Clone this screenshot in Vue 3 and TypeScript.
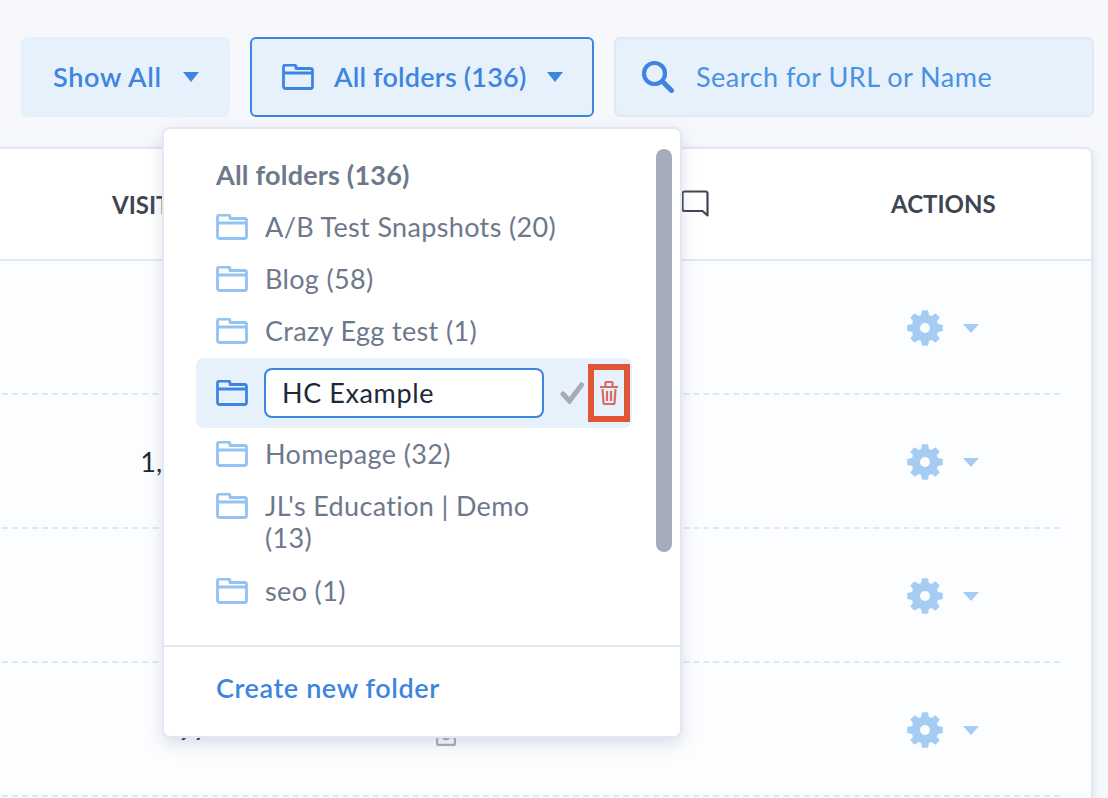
<script setup lang="ts">
interface Folder { name: string }
const folders: Folder[] = [
  { name: 'A/B Test Snapshots (20)' },
  { name: 'Blog (58)' },
  { name: 'Crazy Egg test (1)' },
]
const after: Folder[] = [
  { name: 'Homepage (32)' },
  { name: "JL's Education | Demo (13)" },
  { name: 'seo (1)' },
]
const rows = [
  { visits: '541', mark: false },
  { visits: '1,412', mark: false },
  { visits: '284', mark: false },
  { visits: '97', mark: true },
]
const folderPath = 'M1.500 9V3a2 2 0 0 1 2-2H12a2 2 0 0 1 2 2v1.500h14.500a2 2 0 0 1 2 2V22.500a2 2 0 0 1-2 2h-25a2 2 0 0 1-2-2V9h29'

function buildGear(): string {
  const pts: string[] = []
  const R = 18
  const r = 13.6
  for (let i = 0; i < 8; i++) {
    const a = (i * Math.PI) / 4 - Math.PI / 2
    const steps: [number, number][] = [
      [r, a - 0.29],
      [R, a - 0.17],
      [R, a + 0.17],
      [r, a + 0.29],
    ]
    for (const [rad, ang] of steps) {
      pts.push(`${(18 + rad * Math.cos(ang)).toFixed(2)} ${(18 + rad * Math.sin(ang)).toFixed(2)}`)
    }
  }
  return `M${pts.join('L')}ZM18 13a5 5 0 1 0 0 10 5 5 0 0 0 0-10z`
}
const gearPath = buildGear()
</script>

<template>
  <div class="page">
    <div class="toolbar">
      <button class="btn show"><span>Show All</span><i class="caret"></i></button>
      <button class="btn folders">
        <svg class="ficon" viewBox="0 0 32 26" width="32" height="26"><path :d="folderPath" fill="none" stroke="#3d85e0" stroke-width="2.800" stroke-linejoin="round" /></svg>
        <span>All folders (136)</span><i class="caret"></i>
      </button>
      <div class="search">
        <svg viewBox="0 0 32 32" width="32" height="32"><circle cx="12.500" cy="12.500" r="10.500" fill="none" stroke="#3d85e0" stroke-width="4.200" /><path d="M21 21l8.500 8.500" stroke="#3d85e0" stroke-width="5" stroke-linecap="round" /></svg>
        <span>Search for URL or Name</span>
      </div>
    </div>

    <div class="table">
      <div class="thead">
        <div class="th-visits">VISITS</div>
        <svg class="comment" viewBox="0 0 28 28" width="28" height="28"><path d="M3.500 1.500h21a2 2 0 0 1 2 2v22l-5-4.500H3.500a2 2 0 0 1-2-2v-15.500a2 2 0 0 1 2-2z" fill="none" stroke="#3f4653" stroke-width="2.200" stroke-linejoin="round" /></svg>
        <div class="th-actions">ACTIONS</div>
      </div>
      <div v-for="(r, i) in rows" :key="i" class="row">
        <div class="visits">{{ r.visits }}</div>
        <div v-if="r.mark" class="mid"><svg viewBox="0 0 20 20" width="20" height="20"><path d="M3 1h14a2 2 0 0 1 2 2v14a2 2 0 0 1-2 2H3a2 2 0 0 1-2-2V3a2 2 0 0 1 2-2zM1 11h6l1.500 2h3l1.500-2h6" fill="none" stroke="#a5abb9" stroke-width="2.400" /></svg></div>
        <div class="act">
          <svg viewBox="0 0 36 36" width="36" height="36"><path :d="gearPath" fill="#a5cdf4" fill-rule="evenodd" /></svg>
          <i class="caret light"></i>
        </div>
      </div>
    </div>

    <div class="menu">
      <div class="list">
        <div class="title">All folders (136)</div>
        <div v-for="f in folders" :key="f.name" class="item">
          <svg class="ficon" viewBox="0 0 32 26" width="32" height="26"><path :d="folderPath" fill="none" stroke="#92c3f2" stroke-width="2.800" stroke-linejoin="round" /></svg>
          <span>{{ f.name }}</span>
        </div>
        <div class="item editing">
          <svg class="ficon" viewBox="0 0 32 26" width="32" height="26"><path :d="folderPath" fill="none" stroke="#3d85e0" stroke-width="2.800" stroke-linejoin="round" /></svg>
          <div class="input">HC Example</div>
          <svg class="check" viewBox="0 0 24 22" width="24" height="22"><path d="M3 12l6.500 7L21.500 3" fill="none" stroke="#a5abb9" stroke-width="5" stroke-linecap="round" /></svg>
          <div class="trash">
            <svg viewBox="0 0 18 24" width="18" height="24"><path d="M0 6h18M5.500 5V2a1 1 0 0 1 1-1h5a1 1 0 0 1 1 1v3M2.500 8l1 14a1 1 0 0 0 1 1h9a1 1 0 0 0 1-1l1-14M7 10v10M11 10v10" fill="none" stroke="#dc6a62" stroke-width="2.200" /></svg>
          </div>
        </div>
        <div v-for="f in after" :key="f.name" class="item">
          <svg class="ficon" viewBox="0 0 32 26" width="32" height="26"><path :d="folderPath" fill="none" stroke="#92c3f2" stroke-width="2.800" stroke-linejoin="round" /></svg>
          <span class="label">{{ f.name }}</span>
        </div>
      </div>
      <div class="scroll"></div>
      <div class="foot">Create new folder</div>
    </div>
  </div>
</template>

<style>
html, body { margin: 0; padding: 0; background: #f6f8fc; }
</style>

<style scoped>
.page { position: relative; width: 1108px; height: 798px; overflow: hidden; background: #f6f8fc; font-family: Lato, "Open Sans", sans-serif; }
.toolbar { display: flex; gap: 20px; padding: 37px 14px 0 21px; height: 80px; }
.btn { display: flex; align-items: center; height: 80px; box-sizing: border-box; border-radius: 6px; background: #e6f1fb; border: 2px solid transparent; color: #3d85e0; font: 600 27px Lato, sans-serif; padding: 0; }
.btn span, .search span { position: relative; top: -1px; }
.show { width: 209px; padding-left: 30px; letter-spacing: .7px; }
.show .caret { margin-left: 21px; }
.folders { width: 344px; border-color: #3d85e0; padding-left: 30px; letter-spacing: .2px; }
.folders span { margin-left: 20px; }
.folders .caret { margin-left: 21px; }
.caret { display: block; width: 0; height: 0; border-left: 8px solid transparent; border-right: 8px solid transparent; border-top: 10px solid #3d85e0; }
.caret.light { border-top-color: #a5cdf4; border-top-width: 9px; }
.search { flex: 1; display: flex; align-items: center; gap: 22px; padding-left: 26px; height: 80px; box-sizing: border-box; border: 2px solid #e2e8f2; border-radius: 6px; background: #e6f1fb; color: #4a90e4; font-size: 27px; letter-spacing: .5px; }
.table { position: absolute; left: -20px; top: 147px; width: 1113px; height: 680px; box-sizing: border-box; background: #fcfdfe; border: 2px solid #e3e7f1; border-radius: 8px; box-shadow: 2px 2px 6px rgba(180, 190, 215, .25); }
.thead { position: relative; height: 110px; background: #fff; border-bottom: 2px solid #e3e7f1; border-radius: 8px 8px 0 0; color: #3f4653; font-size: 24px; font-weight: 700; display: flex; align-items: center; }
.th-visits { margin-left: 130px; }
.comment { position: absolute; left: 699px; top: 41px; }
.th-actions { position: absolute; left: 909px; top: 40px; }
.row { position: relative; height: 132px; border-bottom: 2px dashed #e3e7f1; margin-right: 31px; display: flex; align-items: center; }
.visits { position: absolute; left: 0; width: 227px; text-align: right; font-size: 27px; color: #1e2838; }
.mid { position: absolute; left: 454px; top: 63px; height: 20px; }
.act { position: absolute; left: 925px; display: flex; align-items: center; gap: 20px; padding-top: 2px; }
.menu { position: absolute; left: 162px; top: 127px; width: 520px; height: 611px; box-sizing: border-box; background: #fff; border: 2px solid #e3e7f1; border-radius: 8px; box-shadow: 0 6px 16px rgba(120, 135, 170, .25); }
.list { position: absolute; left: 32px; top: 26px; width: 436px; font-size: 27px; letter-spacing: .35px; }
.title { height: 48px; line-height: 40px; padding-left: 20px; font-weight: 700; color: #6e788c; letter-spacing: .2px; }
.item { display: flex; align-items: flex-start; gap: 17px; min-height: 52px; padding: 8px 0 0 20px; box-sizing: border-box; line-height: 32px; color: #6e788c; }
.list > .item:last-child { margin-top: 13px; }
.item .ficon { margin-top: 3px; flex: none; }
.label { width: 280px; }
.editing { background: #e6f1fb; border-radius: 8px; width: 436px; height: 70px; padding: 0 2px 0 20px; align-items: center; gap: 16px; margin: -1px 0 2px; }
.editing .ficon { margin-top: 0; }
.input { flex: none; width: 280px; height: 50px; box-sizing: border-box; border: 2px solid #3d85e0; border-radius: 8px; background: #fff; padding-left: 16px; line-height: 46px; color: #1e2838; letter-spacing: .6px; }
.check { flex: none; }
.trash { width: 42px; height: 58px; margin-left: -12px; flex: none; box-sizing: border-box; border: 6px solid #e05536; display: flex; align-items: center; justify-content: center; }
.scroll { position: absolute; left: 492px; top: 20px; width: 16px; height: 403px; background: #a6acbc; border-radius: 8px; }
.foot { position: absolute; left: 0; right: 0; top: 516px; height: 91px; border-top: 2px solid #e3e7f1; padding: 24px 0 0 52px; box-sizing: border-box; font-size: 27px; font-weight: 600; letter-spacing: .6px; color: #3d85e0; }
</style>
